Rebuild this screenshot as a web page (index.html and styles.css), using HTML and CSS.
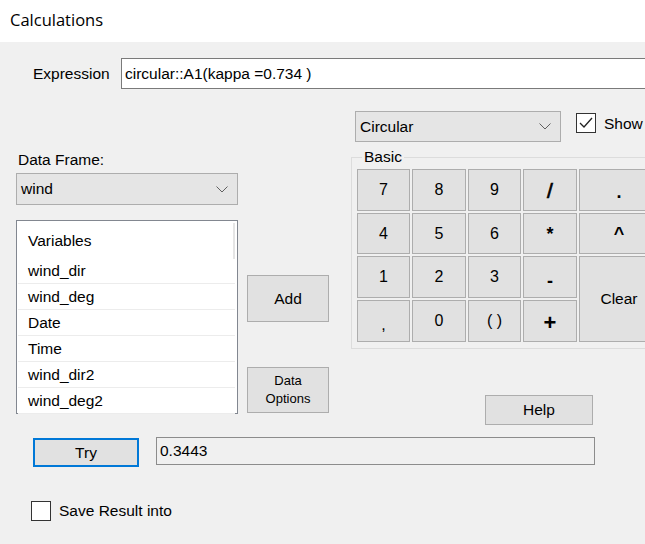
FILE: index.html
```html
<!DOCTYPE html>
<html>
<head>
<meta charset="utf-8">
<link rel="stylesheet" href="styles.css">
</head>
<body>
<div class="window">
  <div class="titlebar">Calculations</div>
  <div class="content">
    <div class="expr-row">
      <span class="expr-label">Expression</span>
      <div class="textbox expr-input">circular::A1(kappa =0.734 )</div>
    </div>
    <div class="columns">
      <div class="col-a">
        <div class="label">Data Frame:</div>
        <div class="combo df-combo">
          <span>wind</span>
          <svg class="chev" width="12" height="7" viewBox="0 0 12 7"><polyline points="0.5,0.5 6,6 11.5,0.5" fill="none" stroke="#606060" stroke-width="1"/></svg>
        </div>
        <div class="listbox">
          <div class="list-header"><span>Variables</span><span class="hdr-div"></span></div>
          <div class="list-row">wind_dir</div>
          <div class="list-row">wind_deg</div>
          <div class="list-row">Date</div>
          <div class="list-row">Time</div>
          <div class="list-row">wind_dir2</div>
          <div class="list-row">wind_deg2</div>
        </div>
      </div>
      <div class="col-b">
        <div class="btn add-btn">Add</div>
        <div class="btn data-btn">Data<br>Options</div>
      </div>
      <div class="col-c">
        <div class="combo-row">
          <div class="combo cat-combo">
            <span>Circular</span>
            <svg class="chev" width="12" height="7" viewBox="0 0 12 7"><polyline points="0.5,0.5 6,6 11.5,0.5" fill="none" stroke="#606060" stroke-width="1"/></svg>
          </div>
          <div class="check-wrap show-check">
            <span class="checkbox"><svg width="18" height="18" viewBox="0 0 18 18"><polyline points="3,9 7,13 15,4" fill="none" stroke="#222" stroke-width="1.3"/></svg></span>
            <span class="check-label">Show</span>
          </div>
        </div>
        <fieldset class="group">
          <legend>Basic</legend>
          <div class="keypad">
            <div class="key">7</div>
            <div class="key">8</div>
            <div class="key">9</div>
            <div class="key op slash">/</div>
            <div class="key op dot">.</div>
            <div class="key">4</div>
            <div class="key">5</div>
            <div class="key">6</div>
            <div class="key op star">*</div>
            <div class="key op caret">^</div>
            <div class="key">1</div>
            <div class="key">2</div>
            <div class="key">3</div>
            <div class="key op minus">-</div>
            <div class="key clear">Clear</div>
            <div class="key comma">,</div>
            <div class="key">0</div>
            <div class="key">( )</div>
            <div class="key op plus">+</div>
          </div>
        </fieldset>
        <div class="btn help-btn">Help</div>
      </div>
    </div>
    <div class="try-row">
      <div class="btn try-btn">Try</div>
      <div class="textbox result">0.3443</div>
    </div>
    <div class="check-wrap save-row">
      <span class="checkbox"></span>
      <span class="check-label">Save Result into</span>
    </div>
  </div>
</div>
</body>
</html>
```

FILE: styles.css
```css
html, body {
  margin: 0;
  padding: 0;
  width: 645px;
  height: 544px;
  overflow: hidden;
  background: #f0f0f0;
}
.window {
  font-family: "Liberation Sans", Arial, sans-serif;
  font-size: 15.5px;
  color: #000;
  width: 645px;
  height: 544px;
  overflow: hidden;
}
.titlebar {
  height: 42px;
  background: #fff;
  padding-left: 10px;
  font-family: "Open Sans", "Liberation Sans", sans-serif;
  font-size: 16.5px;
  line-height: 40px;
  color: #000;
}
.content {
  background: #f0f0f0;
  height: 502px;
}
.expr-row {
  display: flex;
  align-items: center;
  padding-top: 16px;
  padding-left: 33px;
  height: 31px;
}
.expr-label {
  width: 88px;
  flex: none;
}
.textbox {
  box-sizing: border-box;
  border: 1px solid #7a7a7a;
  background: #fff;
  padding-left: 3px;
  white-space: nowrap;
}
.expr-input {
  width: 600px;
  flex: none;
  height: 31px;
  line-height: 29px;
}
.columns {
  display: flex;
  align-items: flex-start;
  padding-left: 16px;
}
.col-a {
  width: 222px;
  flex: none;
  margin-top: 62px;
}
.label {
  line-height: 18px;
  padding-left: 2px;
}
.combo {
  box-sizing: border-box;
  display: flex;
  align-items: center;
  justify-content: space-between;
  background: #e5e5e5;
  border: 1px solid #adadad;
  padding: 0 9px 0 4px;
}
.df-combo {
  margin-top: 4px;
  height: 32px;
}
.chev {
  display: block;
}
.listbox {
  box-sizing: border-box;
  margin-top: 15px;
  height: 194px;
  border: 1px solid #828790;
  background: #fff;
  padding: 0 2px 0 1px;
}
.list-header {
  height: 37px;
  display: flex;
  align-items: center;
  justify-content: space-between;
  padding-left: 10px;
  padding-top: 2px;
  box-sizing: border-box;
}
.hdr-div {
  width: 2px;
  height: 36px;
  background: #e5e5e5;
  align-self: flex-start;
}
.list-row {
  box-sizing: border-box;
  height: 26px;
  line-height: 25px;
  border-bottom: 1px solid #ececec;
  padding-left: 10px;
}
.col-b {
  width: 82px;
  flex: none;
  margin-left: 9px;
}
.btn {
  box-sizing: border-box;
  background: #e1e1e1;
  border: 1px solid #adadad;
  display: flex;
  align-items: center;
  justify-content: center;
  text-align: center;
}
.add-btn {
  margin-top: 186px;
  height: 47px;
}
.data-btn {
  margin-top: 45px;
  height: 46px;
  font-size: 13px;
  line-height: 18px;
}
.col-c {
  flex: none;
  width: 330px;
  margin-left: 22px;
}
.combo-row {
  display: flex;
  align-items: flex-start;
  margin-top: 22px;
  padding-left: 4px;
}
.cat-combo {
  width: 206px;
  height: 31px;
}
.check-wrap {
  display: flex;
  align-items: center;
}
.show-check {
  margin-left: 15px;
  margin-top: 1px;
}
.checkbox {
  box-sizing: border-box;
  width: 20px;
  height: 20px;
  border: 1px solid #333;
  background: #fff;
  display: flex;
  align-items: center;
  justify-content: center;
  flex: none;
}
.check-label {
  margin-left: 8px;
  white-space: nowrap;
}
.show-check .check-label {
  margin-top: 3px;
}
.group {
  margin: 6px 0 0 0;
  padding: 3px 0 6px 5px;
  border: 1px solid #dcdcdc;
  min-width: 0;
}
.group legend {
  padding: 0 2px;
  margin-left: 5px;
  line-height: 18px;
}
.keypad {
  display: grid;
  grid-template-columns: 53px 54px 53px 54px 80px;
  grid-template-rows: 42px 41px 42px 42px;
  gap: 2px;
  font-size: 16px;
}
.key {
  box-sizing: border-box;
  background: #e1e1e1;
  border: 1px solid #adadad;
  display: flex;
  align-items: center;
  justify-content: center;
  line-height: 1;
}
.key.op {
  font-weight: bold;
  font-size: 18px;
}
.key.slash {
  font-size: 21px;
  font-weight: normal;
  -webkit-text-stroke: 0.7px #000;
}
.key.dot {
  align-items: flex-end;
  padding-bottom: 9px;
}
.key.caret {
  align-items: flex-start;
  padding-top: 11px;
}
.key.minus {
  padding-top: 8px;
}
.key.plus {
  font-size: 22px;
  padding-top: 4px;
}
.key.comma {
  align-items: flex-end;
  padding-bottom: 8px;
}
.key.clear {
  grid-row: 3 / span 2;
  grid-column: 5;
  font-size: 15.5px;
}
.help-btn {
  margin-top: 46px;
  margin-left: 134px;
  width: 108px;
  height: 30px;
}
.try-row {
  display: flex;
  align-items: flex-start;
  margin-top: 12px;
  padding-left: 33px;
}
.try-btn {
  width: 106px;
  height: 29px;
  margin-top: 1px;
  border: 2px solid #0078d7;
}
.result {
  margin-left: 17px;
  width: 439px;
  height: 28px;
  line-height: 26px;
  background: #f0f0f0;
  border: 1px solid #8c8c8c;
}
.save-row {
  margin-top: 34px;
  padding-left: 31px;
}
```
